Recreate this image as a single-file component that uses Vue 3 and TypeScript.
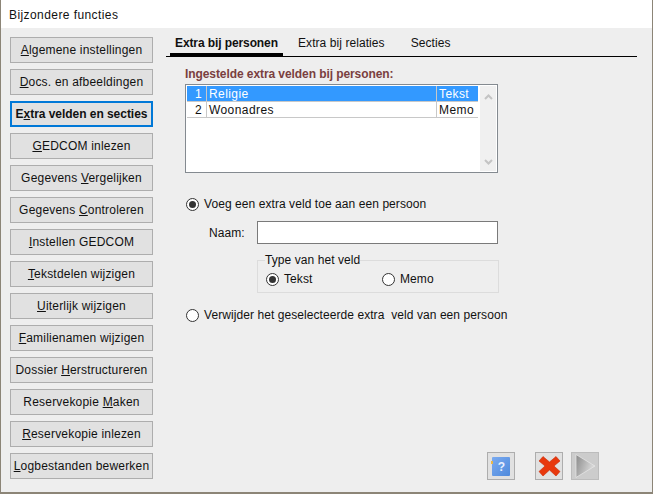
<script setup lang="ts">
interface SideButton {
  before: string;
  key: string;
  after: string;
  focused?: boolean;
}

interface FieldRow {
  id: number;
  name: string;
  type: string;
  selected?: boolean;
}

const buttons: SideButton[] = [
  { before: "", key: "A", after: "lgemene instellingen" },
  { before: "", key: "D", after: "ocs. en afbeeldingen" },
  { before: "E", key: "x", after: "tra velden en secties", focused: true },
  { before: "", key: "G", after: "EDCOM inlezen" },
  { before: "Gegevens ", key: "V", after: "ergelijken" },
  { before: "Gegevens ", key: "C", after: "ontroleren" },
  { before: "", key: "I", after: "nstellen GEDCOM" },
  { before: "", key: "T", after: "ekstdelen wijzigen" },
  { before: "", key: "U", after: "iterlijk wijzigen" },
  { before: "", key: "F", after: "amilienamen wijzigen" },
  { before: "Dossier ", key: "H", after: "erstructureren" },
  { before: "Reservekopie ", key: "M", after: "aken" },
  { before: "", key: "R", after: "eservekopie inlezen" },
  { before: "", key: "L", after: "ogbestanden bewerken" },
];

const rows: FieldRow[] = [
  { id: 1, name: "Religie", type: "Tekst", selected: true },
  { id: 2, name: "Woonadres", type: "Memo" },
];
</script>

<template>
  <div class="window">
    <div class="titlebar">Bijzondere functies</div>
    <div class="body">
      <nav class="side">
        <button
          v-for="b in buttons"
          :key="b.key"
          class="side-btn"
          :class="{ focused: b.focused }"
        >{{ b.before }}<u>{{ b.key }}</u>{{ b.after }}</button>
      </nav>

      <main class="main">
        <div class="tabs">
          <span class="tab active">Extra bij personen</span>
          <span class="tab second">Extra bij relaties</span>
          <span class="tab third">Secties</span>
        </div>

        <section class="panel">
          <div class="list-title">Ingestelde extra velden bij personen:</div>
          <div class="list">
            <div class="rows">
              <div v-for="r in rows" :key="r.id" class="row" :class="{ selected: r.selected }">
                <span class="c-id">{{ r.id }}</span>
                <span class="c-name">{{ r.name }}</span>
                <span class="c-type">{{ r.type }}</span>
              </div>
            </div>
            <div class="scroll">
              <svg width="9" height="6" viewBox="0 0 9 6"><path d="M1 5 4.500 1.500 8 5" fill="none" stroke="#c4c4c4" stroke-width="2" /></svg>
              <svg width="9" height="6" viewBox="0 0 9 6"><path d="M1 1 4.500 4.500 8 1" fill="none" stroke="#c4c4c4" stroke-width="2" /></svg>
            </div>
          </div>

          <label class="radio top"><i class="dot on"></i>Voeg een extra veld toe aan een persoon</label>
          <div class="name-row">
            <span class="name-label">Naam:</span>
            <div class="name-input"></div>
          </div>
          <fieldset class="type-box">
            <legend>Type van het veld</legend>
            <label class="radio"><i class="dot on"></i>Tekst</label>
            <label class="radio"><i class="dot"></i>Memo</label>
          </fieldset>
          <label class="radio remove"><i class="dot"></i>Verwijder het geselecteerde extra&nbsp; veld van een persoon</label>
        </section>

        <div class="actions">
          <button class="icon-btn help">
            <svg width="22" height="22" viewBox="0 0 22 22">
              <defs>
                <linearGradient id="bk" x1="0" x2="1" y1="0" y2="1">
                  <stop offset="0" stop-color="#7aaaf0" />
                  <stop offset="1" stop-color="#4f8adc" />
                </linearGradient>
              </defs>
              <rect x="2" y="2" width="18" height="19" rx="1" fill="url(#bk)" />
              <rect x="1" y="6" width="2" height="3" fill="#e8b84a" />
              <text x="11.5" y="15.500" text-anchor="middle" class="q">?</text>
            </svg>
          </button>
          <button class="icon-btn close">
            <svg width="24" height="24" viewBox="0 0 24 24">
              <path d="M2 7 6 2.500 12.500 8 19 2.500 23 7 17 12 23 17.500 19 22 12.500 16 6 22 2 17.500 8 12z" fill="#e8380d" stroke="#c92a06" stroke-width=".6" />
            </svg>
          </button>
          <button class="icon-btn play">
            <svg width="22" height="24" viewBox="0 0 22 24">
              <defs>
                <linearGradient id="pl" x1="0" x2="1" y1="0" y2="0.4">
                  <stop offset="0" stop-color="#8a8a8a" />
                  <stop offset="1" stop-color="#dcdcdc" />
                </linearGradient>
              </defs>
              <path d="M2 .5 21 12 2 23.500z" fill="url(#pl)" stroke="#e4e4e4" stroke-width=".8" />
            </svg>
          </button>
        </div>
      </main>
    </div>
  </div>
</template>

<style>
html,
body {
  margin: 0;
  background: #eeeeee;
}
</style>

<style scoped>
.window {
  width: 653px;
  height: 494px;
  box-sizing: border-box;
  border: 1px solid #8c8577;
  border-width: 0 1px 2px 1px;
  background: #eeeeee;
  font-family: "Liberation Sans", Arial, sans-serif;
  font-size: 12px;
  letter-spacing: 0.07px;
  color: #111;
  display: flex;
  flex-direction: column;
}
.titlebar {
  height: 28px;
  line-height: 30px;
  background: #fff;
  padding-left: 8px;
  font-size: 12px;
  letter-spacing: 0.42px;
  flex: none;
}
.body {
  flex: 1;
  display: flex;
  min-height: 0;
}
.side {
  width: 165px;
  flex: none;
  box-sizing: border-box;
  padding: 9px 0 0 9px;
  display: flex;
  flex-direction: column;
  gap: 6px;
}
.side-btn {
  width: 143px;
  height: 26px;
  box-sizing: border-box;
  padding: 0;
  border: 1px solid #adadad;
  background: #e1e1e1;
  font: inherit;
  letter-spacing: 0.2px;
  color: #111;
  white-space: nowrap;
  text-align: center;
}
.side-btn.focused {
  border: 2px solid #0078d7;
  font-weight: bold;
  letter-spacing: -0.04px;
}
.main {
  flex: 1;
  display: flex;
  flex-direction: column;
  min-width: 0;
}
.tabs {
  width: 471px;
  height: 29px;
  box-sizing: border-box;
  border-bottom: 1px solid #000;
  display: flex;
  align-items: flex-start;
  padding: 8px 0 0 4px;
}
.tab {
  line-height: 15px;
}
.tab.active {
  width: 113px;
  height: 20px;
  padding-left: 5px;
  box-sizing: border-box;
  font-weight: bold;
  border-bottom: 3px solid #000;
  letter-spacing: -0.1px;
}
.tab.second {
  margin-left: 15px;
}
.tab.third {
  margin-left: 26px;
}
.panel {
  padding: 10px 0 0 19px;
  flex: 1;
}
.list-title {
  color: #7a3f3f;
  font-weight: bold;
  line-height: 15px;
  letter-spacing: -0.08px;
}
.list {
  width: 313px;
  height: 89px;
  margin-top: 2px;
  box-sizing: border-box;
  border: 1px solid #848a90;
  background: #fff;
  display: flex;
  padding: 1px;
}
.rows {
  width: 291px;
  flex: none;
}
.row {
  display: flex;
  height: 16px;
  line-height: 17px;
  box-sizing: border-box;
  border-bottom: 1px solid #c8c8c8;
  letter-spacing: 0.42px;
}
.row.selected {
  background: #3399ff;
  color: #fff;
}
.c-id {
  width: 20px;
  box-sizing: border-box;
  text-align: right;
  padding-right: 4px;
  border-right: 1px solid #c8c8c8;
}
.c-name {
  width: 230px;
  box-sizing: border-box;
  padding-left: 2px;
  border-right: 1px solid #c8c8c8;
}
.c-type {
  flex: 1;
  padding-left: 2px;
}
.scroll {
  width: 17px;
  margin-left: 2px;
  background: #f0f0f0;
  display: flex;
  flex-direction: column;
  justify-content: space-between;
  align-items: center;
  padding: 8px 0 6px;
  box-sizing: border-box;
}
.radio {
  display: flex;
  align-items: center;
  line-height: 15px;
}
.dot {
  width: 13px;
  height: 13px;
  box-sizing: border-box;
  border: 1px solid #333;
  border-radius: 50%;
  background: #fff;
  margin-right: 5px;
  flex: none;
  position: relative;
}
.dot.on::after {
  content: "";
  position: absolute;
  inset: 2px;
  border-radius: 50%;
  background: #333;
}
.top {
  margin-top: 24px;
  margin-left: 1px;
}
.name-row {
  display: flex;
  align-items: center;
  margin-top: 9px;
}
.name-label {
  width: 72px;
  padding-left: 24px;
  box-sizing: border-box;
}
.name-input {
  width: 241px;
  height: 23px;
  box-sizing: border-box;
  border: 1px solid #7a7a7a;
  background: #fff;
}
.type-box {
  width: 241px;
  height: 39px;
  margin: 10px 0 0 72px;
  padding: 0 0 1px 8px;
  box-sizing: border-box;
  border: 1px solid #dcdcdc;
  display: flex;
  align-items: center;
}
.type-box legend {
  padding: 0;
  margin-left: -1px;
  line-height: 13px;
}
.type-box .radio {
  width: 116px;
}
.remove {
  margin-top: 15px;
  margin-left: 1px;
}
.actions {
  display: flex;
  padding: 0 0 12px 321px;
}
.icon-btn {
  width: 28px;
  height: 28px;
  padding: 0;
  box-sizing: border-box;
  border: 1px solid #adadad;
  background: #e1e1e1;
  display: flex;
  align-items: center;
  justify-content: center;
}
.close {
  margin-left: 20px;
}
.play {
  margin-left: 8px;
  background: #cccccc;
  border-color: #bcbcbc;
}
.q {
  font: bold 12px "Liberation Sans", sans-serif;
  fill: #e8f0ff;
}
</style>
